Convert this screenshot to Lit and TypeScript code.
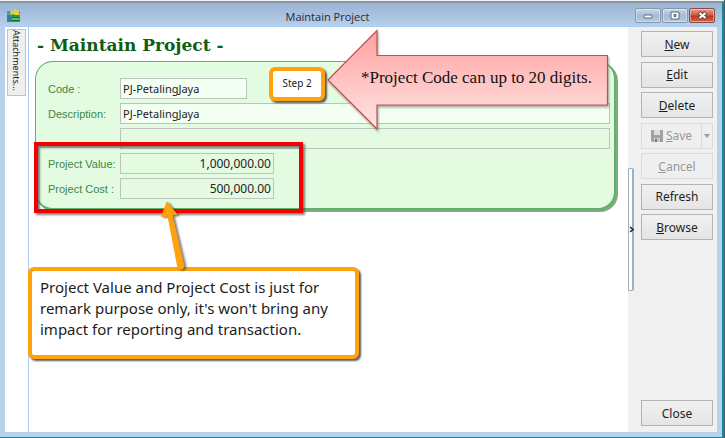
import { LitElement, html, css, svg } from "lit";
import { customElement } from "lit/decorators.js";

const appIcon = svg`
  <rect x="0" y="2" width="13" height="11" fill="#3f8f5c"/>
  <path d="M0 2h5v4H0z" fill="#3c9fb8"/>
  <path d="M4 1l2 1 2-2 2 2 3-1-1 3 1 2H8L6 5 3 6z" fill="#e8cf3c"/>
  <path d="M3 6l3 2-3 2 2 2H0V8z" fill="#2f7fa6"/>
  <path d="M5 8h7v1H5zM4 11h8v1H4z" fill="#1f6b32"/>
  <path d="M5 9h7v2H5z" fill="#3fd35a"/>`;

@customElement("title-bar")
export class TitleBar extends LitElement {
  static styles = css`
    :host { display: flex; align-items: center; height: 23px; padding: 0 7px; color: #222c38; }
    .title { flex: 1; text-align: center; font: 11px "Open Sans", "Noto Sans", sans-serif; margin: 0; padding-top: 4px; }
    .icon { display: block; padding-top: 2px; }
    .controls { display: flex; gap: 1px; padding-top: 2px; }
    button { width: 26px; height: 15px; padding: 0; display: grid; place-items: center; border: 1px solid #8598ae; border-radius: 2px; background: linear-gradient(#c9d8e9, #a5bcd6 50%, #b4cae2); box-shadow: inset 0 0 0 1px #ffffff66; }
    .close { border-color: #8c4a48; background: linear-gradient(#e3a090, #cf5b43 45%, #bb371e 55%, #d4684b); }
  `;
  render() {
    return html`
      <svg class="icon" width="13" height="13" aria-hidden="true">${appIcon}</svg>
      <h1 class="title">Maintain Project</h1>
      <div class="controls">
        <button aria-label="Minimize"><svg width="10" height="9"><rect x="1" y="4" width="8" height="3" rx="1" fill="#fff" stroke="#5d6672"/></svg></button>
        <button aria-label="Maximize"><svg width="10" height="9"><path fill-rule="evenodd" d="M1 1h8v7H1zM4 3.5h2v2H4z" fill="#fff" stroke="#5d6672"/></svg></button>
        <button class="close" aria-label="Close window"><svg width="11" height="9"><path d="M2 1.5l7 6M9 1.5l-7 6" stroke="#6b4545" stroke-width="4"/><path d="M2.5 2l6 5M8.5 2l-6 5" stroke="#fff" stroke-width="2"/></svg></button>
      </div>`;
  }
}

@customElement("project-form")
export class ProjectForm extends LitElement {
  static styles = css`
    :host { display: block; }
    h2 { margin: 0; padding-left: 2px; height: 26px; font: bold 17px/26px "DejaVu Serif", serif; color: #0d5e14; white-space: nowrap; }
    form { position: relative; display: grid; grid-template-columns: 72px minmax(0, 1fr); grid-auto-rows: 21px; gap: 4px 0; margin-top: 3px; padding: 16px 4px 9px 12px; border: 1px solid #5fb269; border-right-width: 2px; border-bottom-width: 2px; border-radius: 18px; background: #e3fbe1; box-shadow: 2px 2px 0 #7dab83; }
    label { align-self: center; font: 11px "Liberation Sans", sans-serif; color: #3d8747; white-space: nowrap; }
    input { box-sizing: border-box; width: 100%; height: 21px; padding: 0 2px; border: 1px solid #bcc4bd; border-radius: 0; background: #f3fff2; font: 11px "Noto Sans", sans-serif; color: #222; outline: none; }
    .code { width: 127px; }
    .extra { grid-column: 2; background: #e4fbe2; }
    .amount { width: 154px; text-align: right; background: #e4fbe2; font-size: 12px; }
    .highlight { position: absolute; left: -2px; top: 80px; width: 261px; height: 63px; border: 4px solid #f40000; box-shadow: 2px 2px 2px #444a, inset 2px 2px 2px #444a; pointer-events: none; }
  `;
  render() {
    return html`
      <h2>- Maintain Project -</h2>
      <form>
        <label for="code">Code :</label>
        <input id="code" class="code" value="PJ-PetalingJaya">
        <label for="description">Description:</label>
        <input id="description" value="PJ-PetalingJaya">
        <input class="extra" aria-label="Description, second line">
        <label for="value">Project Value:</label>
        <input id="value" class="amount" value="1,000,000.00">
        <label for="cost">Project Cost :</label>
        <input id="cost" class="amount" value="500,000.00">
        <div class="highlight"></div>
      </form>`;
  }
}

@customElement("action-bar")
export class ActionBar extends LitElement {
  static styles = css`
    :host { box-sizing: border-box; display: flex; flex-direction: column; width: 89px; padding: 4px 4px 6px 13px; background: #f0f0f0; }
    .stack { display: flex; flex-direction: column; justify-content: space-between; height: 209px; }
    button { box-sizing: border-box; height: 26px; width: 100%; padding: 0; border: 1px solid #b4b4b4; border-radius: 0; background: linear-gradient(#f0f0f0, #e5e5e5); font: 12px "Noto Sans", sans-serif; color: #1e1e1e; }
    button:disabled { border-color: #dcdcdc; background: #efefef; color: #999; }
    .split { display: flex; }
    .save { display: flex; align-items: center; justify-content: center; gap: 3px; flex: 1; }
    .split .more { width: 12px; margin-left: -1px; display: grid; place-items: center; }
    .close { margin-top: auto; }
  `;
  render() {
    return html`
      <div class="stack">
        <button><u>N</u>ew</button>
        <button><u>E</u>dit</button>
        <button><u>D</u>elete</button>
        <div class="split">
          <button class="save" disabled>
            <svg width="12" height="12" aria-hidden="true"><path d="M0 0h12v12H1l-1-1z" fill="#a2a2a2"/><path d="M3 0h6v5H3z" fill="#dedede"/><path d="M3 8h6v4H3z" fill="#c8c8c8"/><path d="M4 9h2v3H4z" fill="#777"/></svg>
            <span><u>S</u>ave</span>
          </button>
          <button class="more" disabled aria-label="More save options"><svg width="6" height="4"><path d="M0 0h6L3 4z" fill="#999"/></svg></button>
        </div>
        <button disabled><u>C</u>ancel</button>
        <button>Refresh</button>
        <button><u>B</u>rowse</button>
      </div>
      <button class="close">Close</button>`;
  }
}

@customElement("app-root")
export class AppRoot extends LitElement {
  static styles = css`
    :host { box-sizing: border-box; display: flex; flex-direction: column; min-height: 100vh; padding-top: 1px; background: #eef3f8; border-right: 1px solid #3a6470; }
    .window { flex: 1; display: flex; flex-direction: column; border-top: 2px solid #8a959c; border-right: 2px solid #1b86a0; border-bottom: 1px solid #1b7f98; background: linear-gradient(#98b3d2, #b8d1ec 24px, #b9d1ea); }
    .body { flex: 1; display: flex; margin: 0 5px 5px; border-top: 1px solid #a9cdf3; }
    .dock { width: 24px; box-sizing: border-box; padding: 2px 2px 0 2px; background: #fff; border-right: 1px solid #abcdf3; }
    .attachments { width: 19px; height: 67px; box-sizing: border-box; padding: 0; border: 1px solid #c3c3c3; background: #efefef; writing-mode: vertical-rl; text-align: left; font: 9px "Noto Sans", sans-serif; color: #222; white-space: nowrap; }
    .main { position: relative; flex: 1; min-width: 0; padding: 5px 12px 0 6px; background: #fff; }
    .side { position: relative; display: flex; }
    .splitter { position: absolute; left: 0; top: 141px; width: 6px; height: 123px; box-sizing: border-box; padding: 0; border: 1px solid #a7adb2; border-right: 2px solid #91b3cb; border-radius: 2px; background: #fff; display: grid; place-items: center; overflow: visible; }
    .overlay { position: absolute; }
    .arrow { left: 298px; top: 2px; overflow: visible; filter: drop-shadow(1px 2px 1px #6668); }
    .arrow-text { left: 332px; top: 40px; margin: 0; font: 17px/22px "Liberation Serif", serif; color: #111; white-space: nowrap; }
    .callout { box-sizing: border-box; margin: 0; border: 4px solid #ffa20d; border-radius: 6px; background: #fff; color: #1c1c1c; box-shadow: 2px 2px 2px #333c; }
    .step { left: 240px; top: 40px; width: 56px; height: 34px; font: 10px/25px "Noto Sans", sans-serif; text-align: center; }
    .note { left: -1px; top: 240px; width: 331px; height: 92px; padding: 6px 8px; font: 15px/21px "Noto Sans", sans-serif; white-space: nowrap; }
    .pointer { left: 130px; top: 174px; overflow: visible; filter: drop-shadow(2px 1px 1px #333a); }
  `;
  render() {
    return html`
      <div class="window">
        <title-bar></title-bar>
        <div class="body">
          <div class="dock"><button class="attachments">Attachments...</button></div>
          <main class="main">
            <project-form></project-form>
            <svg class="overlay arrow" width="282" height="102" aria-hidden="true">
              <defs><linearGradient id="pink" x1="0" y1="0" x2="0" y2="1"><stop offset="0" stop-color="#ffa09e"/><stop offset="1" stop-color="#ffe6e6"/></linearGradient></defs>
              <path d="M1 51L50 1.500V26.500H280.500V76H50V100z" fill="url(#pink)" stroke="#c0504d" stroke-width="1.200"/>
            </svg>
            <p class="overlay arrow-text">*Project Code can up to 20 digits.</p>
            <p class="overlay callout step">Step 2</p>
            <p class="overlay callout note">Project Value and Project Cost is just for<br>remark purpose only, it's won't bring any<br>impact for reporting and transaction.</p>
            <svg class="overlay pointer" width="28" height="70" aria-hidden="true"><path d="M8 1L18 13.500 13 14 25 65Q24 70 19 67L9 15 2.500 15.500z" fill="#ffa20d" stroke="#ffa20d" stroke-linejoin="round"/></svg>
          </main>
          <div class="side">
            <action-bar></action-bar>
            <button class="splitter" aria-label="Collapse panel"><svg width="5" height="7"><path d="M1 1l3 2.500L1 6" fill="none" stroke="#222" stroke-width="1.500"/></svg></button>
          </div>
        </div>
      </div>`;
  }
}
